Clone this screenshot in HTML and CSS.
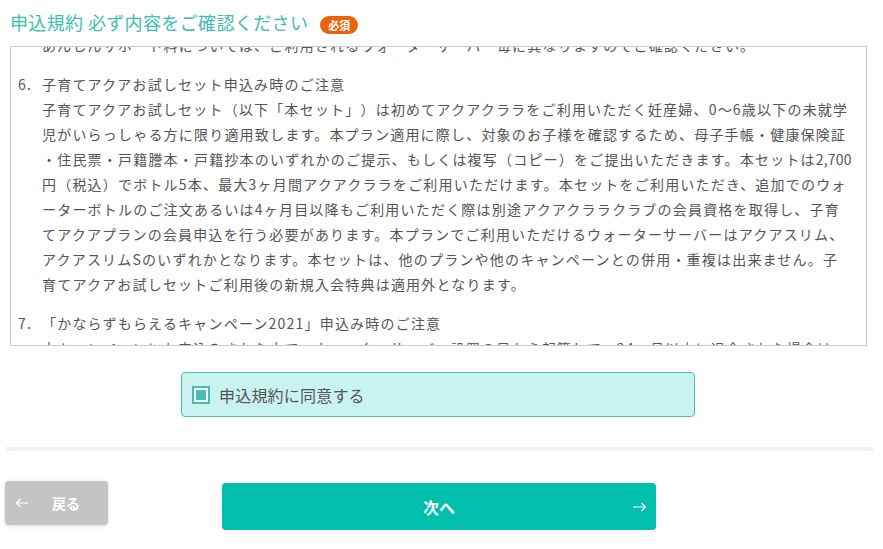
FILE: index.html
```html
<!DOCTYPE html>
<html lang="ja">
<head>
<meta charset="utf-8">
<title>申込規約</title>
<link rel="stylesheet" href="styles.css">
</head>
<body>
<div class="page">
  <section class="terms-section">
    <h2 class="heading"><span class="heading-text">申込規約 必ず内容をご確認ください</span><span class="badge">必須</span></h2>
    <div class="terms" id="terms">
      <ol class="terms-list">
        <li class="item">
          <div class="item-body">
            <p>あんしんサポート料について</p>
            <p>あんしんサポート料については、ご利用されるウォーターサーバー毎に異なりますのでご確認ください。</p>
          </div>
        </li>
        <li class="item">
          <div class="item-body">
            <p>子育てアクアお試しセット申込み時のご注意</p>
            <p>子育てアクアお試しセット（以下「本セット」）は初めてアクアクララをご利用いただく妊産婦、0〜6歳以下の未就学児がいらっしゃる方に限り適用致します。本プラン適用に際し、対象のお子様を確認するため、母子手帳・健康保険証・住民票・戸籍謄本・戸籍抄本のいずれかのご提示、もしくは複写（コピー）をご提出いただきます。本セットは<span class="price">2,700</span>円（税込）でボトル5本、最大3ヶ月間アクアクララをご利用いただけます。本セットをご利用いただき、追加でのウォーターボトルのご注文あるいは4ヶ月目以降もご利用いただく際は別途アクアクララクラブの会員資格を取得し、子育てアクアプランの会員申込を行う必要があります。本プランでご利用いただけるウォーターサーバーはアクアスリム、アクアスリムSのいずれかとなります。本セットは、他のプランや他のキャンペーンとの併用・重複は出来ません。子育てアクアお試しセットご利用後の新規入会特典は適用外となります。</p>
          </div>
        </li>
        <li class="item">
          <div class="item-body">
            <p>「かならずもらえるキャンペーン2021」申込み時のご注意</p>
            <p>本キャンペーンにお申込みされた方で、ウォーターサーバー設置の日から起算して、24ヶ月以内に退会された場合は、解約事務手数料を申し受けます。</p>
          </div>
        </li>
      </ol>
    </div>
    <label class="agree">
      <span class="check"><span class="check-fill"></span></span>
      <span class="agree-text">申込規約に同意する</span>
    </label>
  </section>
  <div class="divider"></div>
  <div class="actions">
    <button class="btn btn-back" type="button">
      <svg class="arrow" width="14" height="10" viewBox="0 0 14 10"><path d="M13 5H1.5M5.5 1L1.5 5l4 4" fill="none" stroke="#fff" stroke-width="1.2"/></svg>
      <span>戻る</span>
    </button>
    <button class="btn btn-next" type="button">
      <span class="next-label">次へ</span>
      <svg class="arrow arrow-next" width="15" height="10" viewBox="0 0 15 10"><path d="M1 5h12.5M9.5 1l4 4-4 4" fill="none" stroke="#fff" stroke-width="1.2"/></svg>
    </button>
  </div>
</div>
<script src="script.js"></script>
</body>
</html>
```
FILE: styles.css
```css
* {
  box-sizing: border-box;
  margin: 0;
  padding: 0;
}

html,
body {
  background: #fff;
}

body {
  font-family: "Noto Sans CJK JP", "Noto Sans", sans-serif;
  color: #555;
  text-spacing-trim: space-all;
}

.page {
  width: 868px;
  margin-left: 5px;
}

.terms-section {
  padding: 0 6px 0 5px;
}

.heading {
  display: flex;
  align-items: center;
  height: 36px;
  padding-top: 9px;
  margin-bottom: 10px;
  font-size: 18px;
  font-weight: 400;
  line-height: 27px;
  letter-spacing: 0.37px;
  color: #40bdb1;
}

.badge {
  margin-left: 12px;
  margin-top: 4px;
  width: 38px;
  height: 18px;
  border-radius: 9px;
  background: #e9620c;
  color: #fff;
  font-size: 11px;
  font-weight: 700;
  line-height: 18px;
  letter-spacing: 0;
  text-align: center;
}

.terms {
  height: 300px;
  border: 1px solid #cbcbcb;
  overflow-y: auto;
  scrollbar-width: none;
  padding: 10px 13px 10px 7px;
  font-size: 14px;
  line-height: 25px;
  letter-spacing: 1.2px;
  line-break: loose;
  text-spacing-trim: space-all;
  color: #555;
}

.terms::-webkit-scrollbar {
  display: none;
}

.terms-list {
  list-style: none;
  counter-reset: item 4;
}

.item {
  display: flex;
  counter-increment: item;
  margin-bottom: 14px;
}

.item::before {
  content: counter(item) ".";
  flex: 0 0 24px;
}

.item-body {
  flex: 1;
  min-width: 0;
}

.price {
  letter-spacing: 0.2px;
}

.agree {
  display: flex;
  align-items: center;
  width: 514px;
  height: 45px;
  margin: 26px 0 0 171px;
  padding-left: 10px;
  background: #c8f3ee;
  border: 1px solid #49c0b4;
  border-radius: 4px;
  font-size: 16px;
  letter-spacing: 0.2px;
  color: #555;
}

.check {
  width: 18px;
  height: 18px;
  border: 2px solid #45bfb3;
  background: #fff;
  padding: 2px;
  margin-right: 9px;
}

.check-fill {
  display: block;
  width: 100%;
  height: 100%;
  background: #45bfb3;
}

.divider {
  height: 4px;
  margin-top: 30px;
  background: #edf5f4;
}

.actions {
  display: grid;
  grid-template-columns: 1fr 434px 1fr;
  align-items: start;
  margin-top: 30px;
}

.btn {
  border: none;
  border-radius: 4px;
  color: #fff;
  font-family: inherit;
  font-weight: 700;
}

.btn-back {
  display: flex;
  align-items: center;
  justify-self: start;
  width: 103px;
  height: 44px;
  padding-left: 10px;
  gap: 23px;
  background: #c4c4c4;
  box-shadow: 0 1px 4px rgba(0, 0, 0, 0.15);
  font-size: 14px;
}

.btn-next {
  display: grid;
  grid-template-columns: 1fr auto 1fr;
  align-items: center;
  height: 47px;
  margin-top: 2px;
  padding: 0 9px;
  background: #00bfad;
  box-shadow: 0 1px 3px rgba(0, 0, 0, 0.12);
  font-size: 16px;
}

.next-label {
  grid-column: 2;
}

.arrow-next {
  grid-column: 3;
  justify-self: end;
}
```
FILE: script.js
```js
document.getElementById('terms').scrollTop = 49;
```
